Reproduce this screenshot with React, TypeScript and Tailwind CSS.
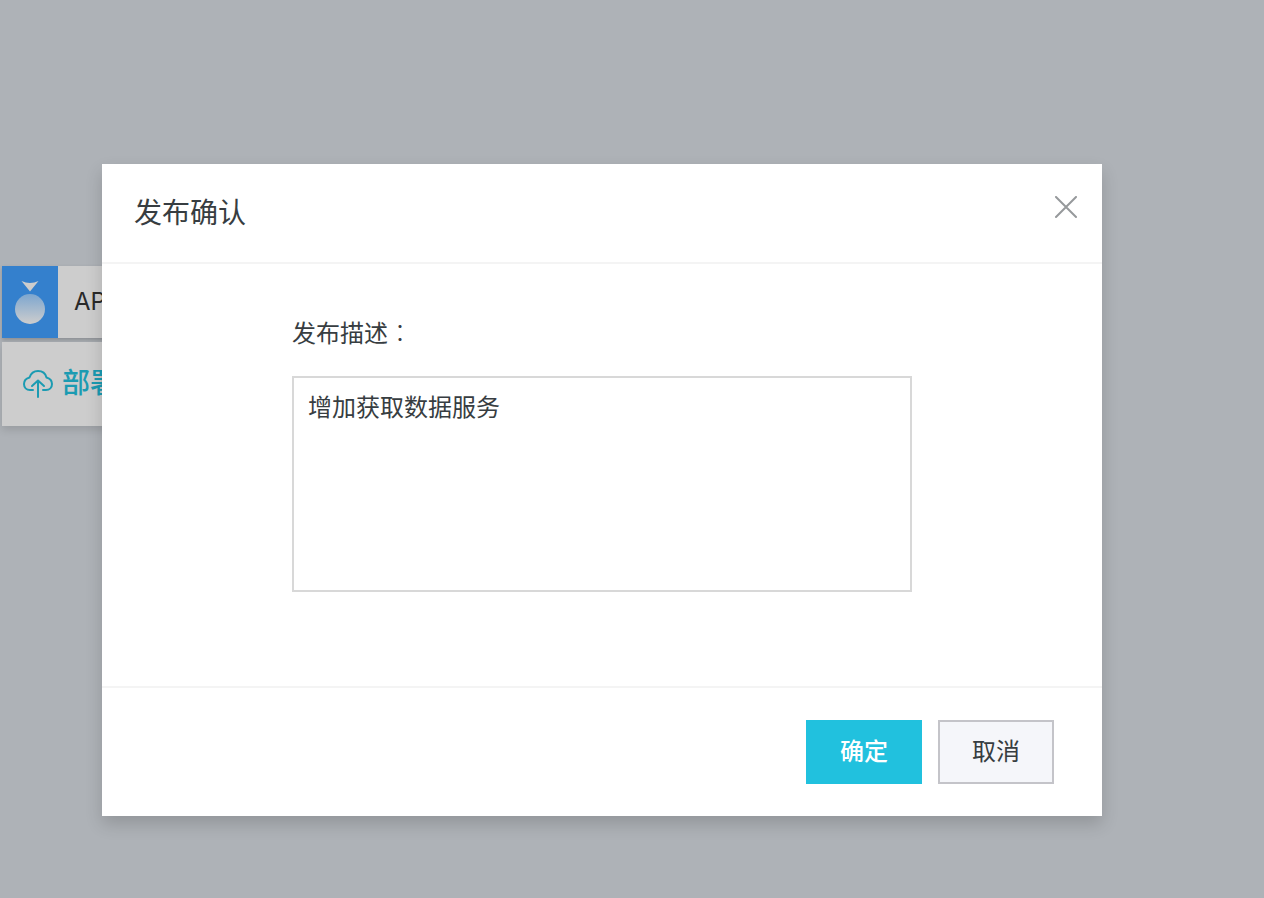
import { useState } from "react"

interface DialogProps {
  onClose: () => void
}

function CircleIcon() {
  return (
    <svg width="56" height="72" viewBox="0 0 56 72" aria-hidden="true">
      <defs>
        <linearGradient id="ball" x1="0" y1="0" x2="0" y2="1">
          <stop offset="0" stopColor="#7da6cf" />
          <stop offset="1" stopColor="#cdcdcd" />
        </linearGradient>
      </defs>
      <path d="M19.500 15Q28 19 36.500 15L28 25.500Z" fill="#cdcdcd" />
      <circle cx="28" cy="43" r="15" fill="url(#ball)" />
    </svg>
  )
}

function UploadIcon() {
  return (
    <svg
      width="32"
      height="32"
      viewBox="0 0 32 32"
      fill="none"
      stroke="currentColor"
      strokeWidth="2"
      strokeLinecap="round"
      strokeLinejoin="round"
      aria-hidden="true"
    >
      <path d="M11 22H8C4.500 22 2 19.500 2 16C2 12.500 4 10.500 7.500 9.500C9 5 12 3 16 3C20.500 3 23.500 5.500 24.500 9.500C28 10.500 30 12.500 30 16C30 19.500 27.500 22 24 22H21" />
      <path d="M16 29V13M10 18L16 12.500L22 18" />
    </svg>
  )
}

function PublishDialog({ onClose }: DialogProps) {
  const [desc, setDesc] = useState("增加获取数据服务")

  return (
    <div
      role="dialog"
      aria-labelledby="publish-title"
      className="w-full bg-white text-[#373d41] shadow-[0_8px_16px_rgba(0,0,0,0.16)]"
    >
      <div className="flex items-start justify-between border-b-2 border-[#f4f4f4] pt-[30px] pb-7 pl-8 pr-6">
        <h2 id="publish-title" className="text-[28px] leading-10">发布确认</h2>
        <button type="button" aria-label="关闭" onClick={onClose} className="mt-0.5 text-[#96999b]">
          <svg width="24" height="24" viewBox="0 0 24 24" stroke="currentColor" strokeWidth="2" strokeLinecap="round">
            <path d="M2 1L22 21M22 1L2 21" />
          </svg>
        </button>
      </div>

      <div className="flex flex-col px-[190px] pt-12 pb-[94px]">
        <label htmlFor="publish-desc" className="text-2xl leading-10">
          发布描述<span className="font-['Noto_Sans_CJK_TC',sans-serif] font-light">：</span>
        </label>
        <textarea
          id="publish-desc"
          value={desc}
          onChange={(e) => setDesc(e.target.value)}
          className="mt-[22px] h-[216px] w-full resize-none border-2 border-[#d8d8d8] bg-white px-3.5 py-3 text-2xl leading-9 outline-none"
        />
      </div>

      <div className="flex justify-end gap-4 border-t-2 border-[#f4f4f4] py-8 pr-12 text-2xl">
        <button type="button" onClick={onClose} className="h-16 w-[116px] bg-[#21c1de] font-medium text-white">
          确定
        </button>
        <button type="button" onClick={onClose} className="h-16 w-[116px] border-2 border-[#c4c4c9] bg-[#f5f6fa]">
          取消
        </button>
      </div>
    </div>
  )
}

export default function App() {
  const [open, setOpen] = useState(true)

  return (
    <div className="relative min-h-screen bg-[#aeb2b7] font-['Liberation_Sans','Noto_Sans_CJK_SC',sans-serif]">
      <div className="flex w-44 flex-col gap-1 pt-[266px] pl-0.5">
        <div className="flex h-[72px] items-center bg-[#cdcdcd] shadow-[0_2px_4px_rgba(0,0,0,0.2)]">
          <div className="bg-[#3480cd]">
            <CircleIcon />
          </div>
          <span className="pl-4 font-[Inter,sans-serif] text-2xl text-[#292929]">API</span>
        </div>
        <button
          type="button"
          onClick={() => setOpen(true)}
          className="flex h-[84px] items-center gap-2 bg-[#cdcdcd] pl-5 text-[28px] font-medium text-[#1b9bb2] shadow-[0_4px_8px_rgba(0,0,0,0.12)]"
        >
          <UploadIcon />
          部署
        </button>
      </div>

      {open && (
        <div className="absolute inset-0 pt-[164px] pr-[162px] pl-[102px]">
          <PublishDialog onClose={() => setOpen(false)} />
        </div>
      )}
    </div>
  )
}
